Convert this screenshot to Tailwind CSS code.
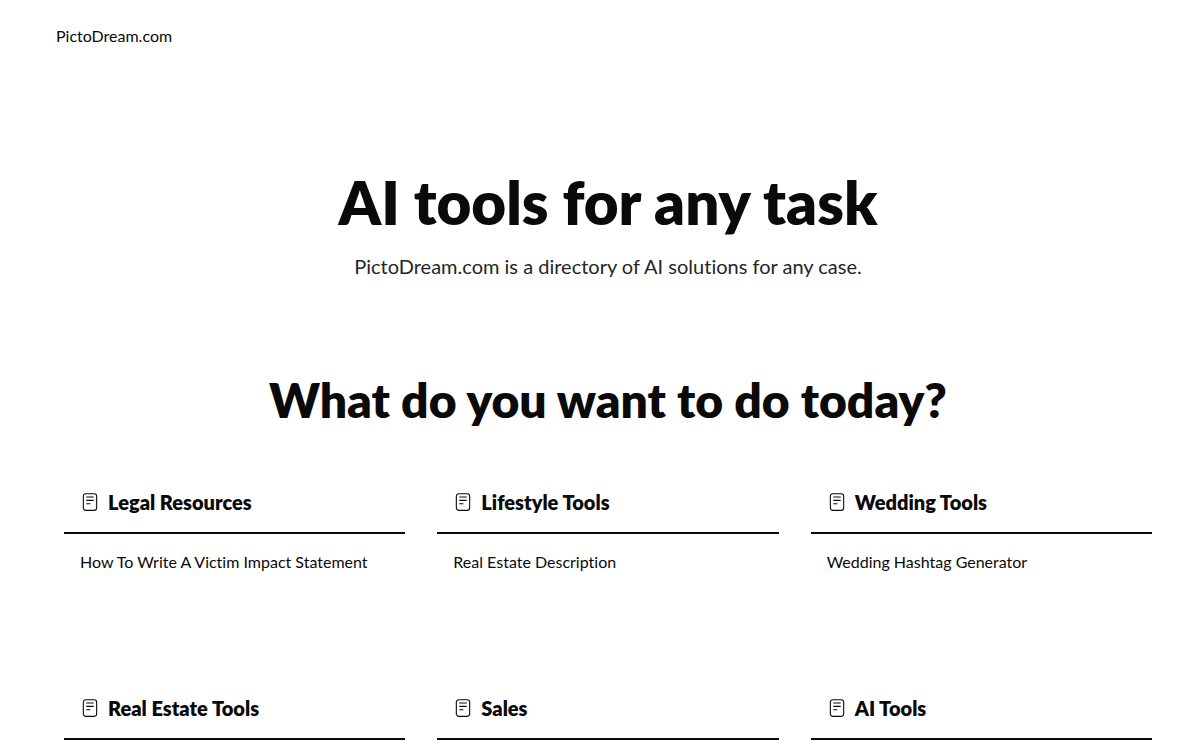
<!DOCTYPE html>
<html lang="en">
  <head>
    <meta charset="UTF-8" />
    <meta name="viewport" content="width=device-width, initial-scale=1.0" />
    <title>PictoDream.com</title>
    <script src="https://cdn.jsdelivr.net/npm/@tailwindcss/browser@4"></script>
  </head>
  <body class="bg-white font-[Lato,sans-serif] text-base text-neutral-950 [font-variant-ligatures:none]">
    <svg class="hidden">
      <symbol id="note" viewBox="0 0 24 24" fill="none" stroke="currentColor" stroke-width="1.3" stroke-linecap="round" stroke-linejoin="round">
        <rect x="4" y="2" width="16" height="20" rx="3" />
        <path d="M8 6h8M8 10h8M8 14h4" />
      </symbol>
    </svg>

    <header class="px-14 py-6">
      <a href="/">PictoDream.com</a>
    </header>

    <main class="pl-16 pr-12">
      <section class="pt-25 text-center">
        <h1 class="text-6xl font-extrabold">AI tools for any task</h1>
        <p class="mt-5 text-xl text-neutral-800">PictoDream.com is a directory of AI solutions for any case.</p>
      </section>

      <h2 class="mt-24 text-center text-5xl font-extrabold">What do you want to do today?</h2>

      <div class="mt-12 grid grid-cols-3 gap-x-8 gap-y-22">
        <section>
          <h3 class="flex items-center gap-2 border-b-2 border-neutral-950 p-4 text-xl font-extrabold">
            <svg class="size-5"><use href="#note" /></svg>
            Legal Resources
          </h3>
          <a href="#" class="block p-4">How To Write A Victim Impact Statement</a>
        </section>
        <section>
          <h3 class="flex items-center gap-2 border-b-2 border-neutral-950 p-4 text-xl font-extrabold">
            <svg class="size-5"><use href="#note" /></svg>
            Lifestyle Tools
          </h3>
          <a href="#" class="block p-4">Real Estate Description</a>
        </section>
        <section>
          <h3 class="flex items-center gap-2 border-b-2 border-neutral-950 p-4 text-xl font-extrabold">
            <svg class="size-5"><use href="#note" /></svg>
            Wedding Tools
          </h3>
          <a href="#" class="block p-4">Wedding Hashtag Generator</a>
        </section>
        <section>
          <h3 class="flex items-center gap-2 border-b-2 border-neutral-950 p-4 text-xl font-extrabold">
            <svg class="size-5"><use href="#note" /></svg>
            Real Estate Tools
          </h3>
        </section>
        <section>
          <h3 class="flex items-center gap-2 border-b-2 border-neutral-950 p-4 text-xl font-extrabold">
            <svg class="size-5"><use href="#note" /></svg>
            Sales
          </h3>
        </section>
        <section>
          <h3 class="flex items-center gap-2 border-b-2 border-neutral-950 p-4 text-xl font-extrabold">
            <svg class="size-5"><use href="#note" /></svg>
            AI Tools
          </h3>
        </section>
      </div>
    </main>
  </body>
</html>
